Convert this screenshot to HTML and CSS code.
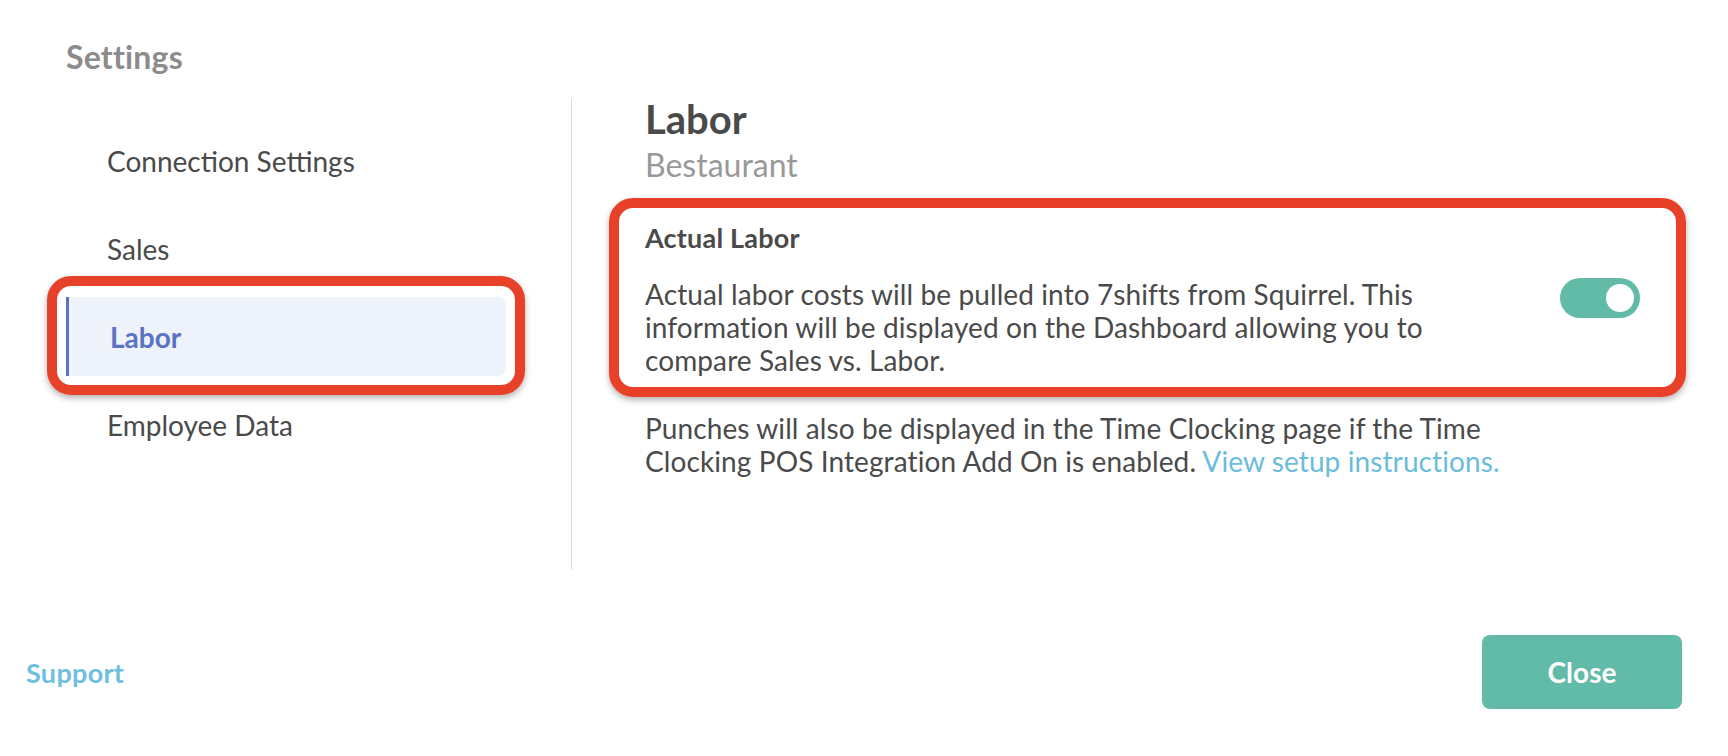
FILE: index.html
```html
<!DOCTYPE html>
<html lang="en">
<head>
<meta charset="utf-8">
<title>Settings</title>
<link rel="stylesheet" href="styles.css">
</head>
<body>
<div class="page">
  <header class="top">
    <h1 class="title">Settings</h1>
  </header>
  <div class="main">
    <nav class="sidebar">
      <a class="nav-item">Connection Settings</a>
      <a class="nav-item">Sales</a>
      <a class="nav-item active">Labor</a>
      <a class="nav-item">Employee Data</a>
    </nav>
    <section class="content">
      <h2 class="heading">Labor</h2>
      <div class="sub">Bestaurant</div>
      <div class="card">
        <div class="card-title">Actual Labor</div>
        <div class="card-row">
          <p class="desc">Actual labor costs will be pulled into 7shifts from Squirrel. This information will be displayed on the Dashboard allowing you to compare Sales vs. Labor.</p>
          <span class="toggle"><span class="knob"></span></span>
        </div>
      </div>
      <p class="note">Punches will also be displayed in the Time Clocking page if the Time Clocking POS Integration Add On is enabled. <a class="link">View setup instructions.</a></p>
    </section>
  </div>
  <footer class="footer">
    <a class="support">Support</a>
    <button class="close">Close</button>
  </footer>
</div>
</body>
</html>
```
FILE: styles.css
```css
* { box-sizing: border-box; margin: 0; padding: 0; }
body {
  font-family: Lato, "Liberation Sans", sans-serif;
  color: #4a4a4a;
  background: #fff;
}
.page {
  width: 1728px;
  height: 756px;
  display: flex;
  flex-direction: column;
}
.top {
  height: 99px;
  padding: 39px 0 0 66px;
}
.title {
  font-size: 32px;
  line-height: 36px;
  font-weight: 700;
  letter-spacing: 0.2px;
  color: #8c8c8c;
}
.main {
  display: flex;
  height: 471px;
}
.sidebar {
  width: 572px;
  border-right: 1px solid #dcdcdc;
  padding-top: 22px;
  display: flex;
  flex-direction: column;
  gap: 9px;
}
.nav-item {
  margin-left: 66px;
  width: 440px;
  height: 79px;
  display: flex;
  align-items: center;
  padding-left: 41px;
  font-size: 28px;
  color: #4a4a4a;
}
.nav-item.active {
  position: relative;
  border-left: 3px solid #5b73c3;
  background: #eef2fa;
  color: #5b73c3;
  font-weight: 700;
  border-radius: 0 8px 8px 0;
}
.nav-item.active::after {
  content: "";
  position: absolute;
  top: -21px;
  bottom: -19px;
  left: -22px;
  right: -19px;
  border: 10px solid #e8412a;
  border-radius: 24px;
  box-shadow: 0 3px 6px rgba(0, 0, 0, 0.3);
}
.content {
  flex: 1;
  padding-left: 73px;
}
.heading {
  font-size: 40px;
  line-height: 40px;
  font-weight: 700;
  color: #4a4a4a;
}
.sub {
  margin-top: 8px;
  font-size: 32px;
  line-height: 36px;
  color: #999;
}
.card {
  position: relative;
  margin-top: 40px;
  width: 995px;
}
.card::after {
  content: "";
  position: absolute;
  top: -25px;
  bottom: -20px;
  left: -36px;
  right: -46px;
  border: 10px solid #e8412a;
  border-radius: 24px;
  box-shadow: 0 3px 6px rgba(0, 0, 0, 0.3);
}
.card-title {
  font-size: 27px;
  line-height: 30px;
  font-weight: 700;
  letter-spacing: 0.2px;
}
.card-row {
  margin-top: 25px;
  display: flex;
  justify-content: space-between;
  align-items: flex-start;
}
.desc {
  width: 800px;
  font-size: 28px;
  line-height: 33px;
  letter-spacing: 0.1px;
}
.toggle {
  flex-shrink: 0;
  width: 80px;
  height: 40px;
  border-radius: 20px;
  background: #62bba7;
  display: flex;
  align-items: center;
  justify-content: flex-end;
  padding-right: 6px;
}
.knob {
  width: 28px;
  height: 28px;
  border-radius: 50%;
  background: #fff;
}
.note {
  margin-top: 35px;
  width: 900px;
  font-size: 28px;
  line-height: 33px;
  letter-spacing: 0.1px;
}
.link {
  color: #6bbcdc;
  text-decoration: none;
}
.footer {
  margin-top: 65px;
  display: flex;
  justify-content: space-between;
  align-items: center;
  padding: 0 46px 0 26px;
}
.support {
  font-size: 27px;
  font-weight: 700;
  letter-spacing: 0.3px;
  color: #71bfdf;
}
.close {
  width: 200px;
  height: 74px;
  background: #62baa8;
  border: none;
  border-radius: 8px;
  color: #fff;
  font-family: Lato, "Liberation Sans", sans-serif;
  font-size: 28px;
  font-weight: 700;
}
```
